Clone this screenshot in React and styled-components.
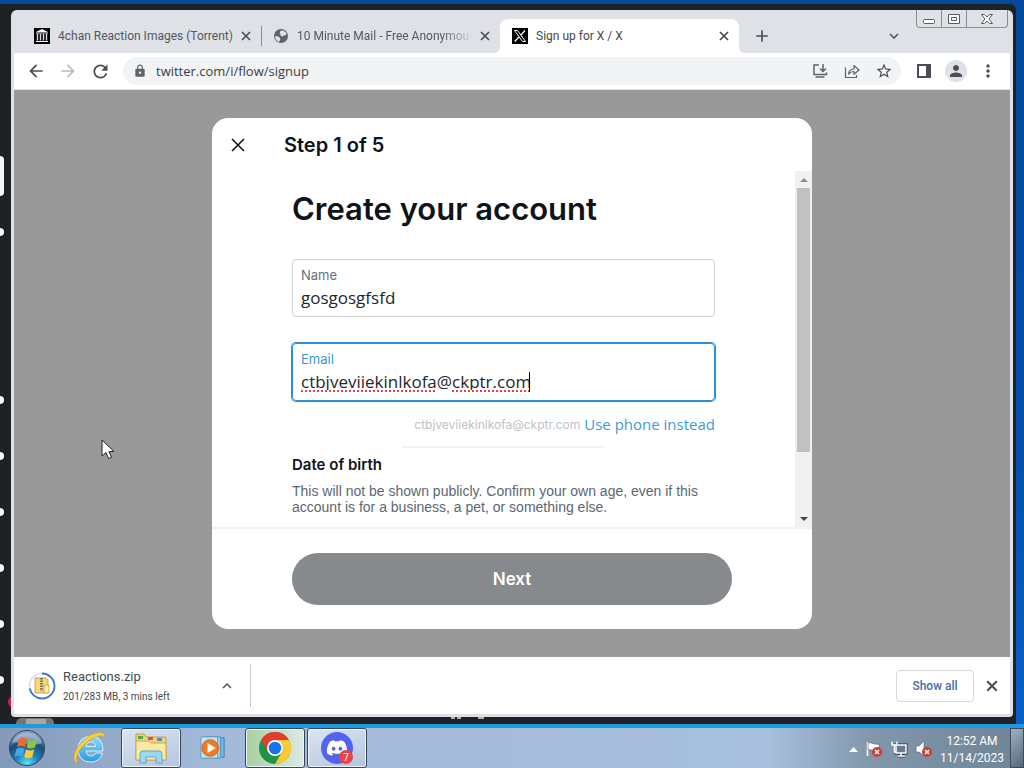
import React from "react";
import styled, { createGlobalStyle } from "styled-components";
import {
    MdArrowBack, MdArrowForward, MdRefresh, MdLock, MdStarBorder, MdPerson,
    MdMoreVert, MdAdd, MdExpandMore, MdExpandLess, MdPublic,
} from "react-icons/md";
import { FaDiscord } from "react-icons/fa";


const tabs = [
    { title: "4chan Reaction Images (Torrent)", icon: "archive", divider: true },
    { title: "10 Minute Mail - Free Anonymou", icon: "globe", fade: true },
    { title: "Sign up for X / X", icon: "x", active: true },
];

// which servers in the window behind have an unread mark
const servers = ["current", "unread", "", "", "unread", "unread", "unread", "unread", "unread"];

const CrossIcon = ({ size }) => (
    <svg width={size} height={size} viewBox="0 0 10 10">
        <path d="m1 1 8 8M9 1 1 9" stroke="#4a4e54" strokeWidth="1.700"/>
    </svg>
)

const ArchiveIcon = () => (
    <svg width="16" height="16" viewBox="0 0 16 16">
        <rect width="16" height="16" fill="#000"/>
        <path d="M8 1 14 4H2zM2 4.500h12v1H2zM2 13h12v1H2z" fill="#fff"/>
        <path d="M3.500 6v6.500M6.500 6v6.500M9.500 6v6.500M12.500 6v6.500" stroke="#ddd" strokeWidth="1.400"/>
    </svg>
)

const GlobeIcon = () => (
    <svg width="16" height="16" viewBox="0 0 16 16">
        <circle cx="8" cy="8" r="7" fill="#5f6368"/>
        <path d="M2 8.500c2-.5 4 0 5 1.500s-.5 2.500-1 4C3.500 13 2 11 2 8.500zM8 2.500c2.500-.5 5 1 5.700 3.500-1.700 2-3.200 1-3.700 2.500-2 0-3-1-2.500-2.500C6 5.500 7 3.500 8 2.500z" fill="#dee1e6"/>
    </svg>
)

const XIcon = () => (
    <svg width="16" height="16" viewBox="0 0 16 16">
        <rect width="16" height="16" fill="#000"/>
        <path d="M2.500 2.500h3l8 11h-3z" fill="none" stroke="#fff" strokeWidth="1"/>
        <path d="M13 2.500 9 7M7 9l-4.300 4.500" stroke="#fff" strokeWidth="1.200"/>
    </svg>
)

const InstallIcon = () => (
    <svg width="16" height="16" viewBox="0 0 16 16" fill="none" stroke="#5f6368" strokeWidth="1.500">
        <path d="M7 2H2v9.500h12.500V9.500M3.500 14h9M11 1v7M8 5.500l3 3 3-3"/>
    </svg>
)

const ShareIcon = () => (
    <svg width="16" height="16" viewBox="0 0 16 16" fill="none" stroke="#5f6368" strokeWidth="1.200" strokeLinejoin="round">
        <path d="M1.500 4.500v10h11V12"/>
        <path d="M4.500 11c.5-3.500 2.500-5 5.500-5V2.500l5 4.500-5 4.300V8.500C7.500 8.500 6 9.200 4.500 11z"/>
    </svg>
)

const ZipIcon = () => (
    <svg width="28" height="28" viewBox="0 0 28 28">
        <circle cx="14" cy="14" r="12.500" fill="none" stroke="#d6def0" strokeWidth="1.600"/>
        <circle cx="14" cy="14" r="12.500" fill="none" stroke="#3f72d0" strokeWidth="1.800" strokeDasharray="56 23" transform="rotate(-90 14 14)"/>
        <path d="M7 6h11l2 2v13H7z" fill="#f4d97c" stroke="#b99a3c" strokeWidth=".8"/>
        <path d="M16 13h5v8h-5z" fill="#ffe9a0" stroke="#b99a3c" strokeWidth=".7"/>
        <path d="M13.500 6v13" stroke="#666" strokeWidth="2.500" strokeDasharray="1.500 1"/>
    </svg>
)

const OrbIcon = () => (
    <svg width="38" height="38" viewBox="0 0 38 38">
        <defs>
            <radialGradient id="orb" cx="50%" cy="95%" r="90%">
                <stop offset="0" stopColor="#5fe6f8"/>
                <stop offset=".35" stopColor="#1d86bd"/>
                <stop offset=".7" stopColor="#1f4a75"/>
                <stop offset="1" stopColor="#8ca9c6"/>
            </radialGradient>
        </defs>
        <circle cx="19" cy="19" r="17.500" fill="url(#orb)" stroke="#2a4562"/>
        <path d="M4 14C8 1 30 1 34 14 25 19 13 11 4 14z" fill="#d8e8f4" opacity=".45"/>
        <path d="M11 10c3-2 5-1.500 8 0l-2 8c-3-1.500-5-1.500-8 0z" fill="#ee6a2c"/>
        <path d="M20.500 11c3 1.500 5 1.300 8.500-.5l-2.200 8c-3 1.500-5 1.500-8.300-.3z" fill="#8fc63d"/>
        <path d="M8.500 20c3-2 5-1.500 8-.2l-2 7.700c-3-1.500-5-1.200-8 .5z" fill="#4aa5e6"/>
        <path d="M18 20.500c3 1.500 5 1.500 8.300-.3l-2.200 8c-3 1.500-5.200 1.500-8.100-.2z" fill="#fcc93a"/>
    </svg>
)

const ExplorerIcon = () => (
    <svg width="34" height="34" viewBox="0 0 34 34">
        <defs>
            <linearGradient id="ie" x2="0" y2="1">
                <stop offset="0" stopColor="#8fdcf8"/>
                <stop offset="1" stopColor="#2a9be0"/>
            </linearGradient>
        </defs>
        <path d="M31 20H14q1 5 5 5 3 0 5-3h6.500Q28 31 18.500 31 7 31 6 19 6 6 18.500 5 31 5 31 20zM14 15.500h9.500Q23 11 19 11t-5 4.500z" fill="url(#ie)" stroke="#d9f1fb" strokeWidth="1"/>
        <path d="M7 31C0 34 0 22 8 13 16 3 28-1 32 3q1 2 0 4C31 2 20 6 12 14 5 21 2 30 7 31z" fill="#f6cf3c" stroke="#c89b28" strokeWidth=".5"/>
    </svg>
)

const FolderIcon = () => (
    <svg width="34" height="34" viewBox="0 0 34 34">
        <path d="M2 6V3h8l2 3h20v23H2z" fill="#f0d27b" stroke="#c29d42"/>
        <path d="M4 5h5v3H4z" fill="#4ba83e"/>
        <path d="M14 6h5v3h-5z" fill="#d65540"/>
        <path d="M23 7h5v3h-5z" fill="#4b8fd0"/>
        <path d="M2 10h13l2 2h15v17H2z" fill="#fbeaa3" stroke="#cbaa52"/>
        <path d="M6 32v-9q0-3 3-3h16q3 0 3 3v9h-6v-6H12v6z" fill="#9bd9f3" stroke="#5aa6cc"/>
    </svg>
)

const PlayerIcon = () => (
    <svg width="28" height="26" viewBox="0 0 30 28">
        <path d="M9 3h18v21H9z" fill="#72b5de" stroke="#4086b4"/>
        <path d="M5 2h18v23H5z" fill="#a6d5ee" stroke="#4c94c2"/>
        <path d="M2 2h18v23H2z" fill="#c3e2f2" stroke="#5a9cc5"/>
        <circle cx="12" cy="14" r="9" fill="#ef7b23" stroke="#d7651a"/>
        <path d="M9 8.500v11l9-5.500z" fill="#fff"/>
    </svg>
)

const ChromeIcon = () => (
    <svg width="32" height="32" viewBox="0 0 32 32">
        <circle cx="16" cy="16" r="16" fill="#1e9446"/>
        <path d="M9.100 20 2.140 8A16 16 0 0 1 29.860 8H16z" fill="#e33b2e"/>
        <path d="M22.900 20 16 32A16 16 0 0 0 29.860 8H16a8 8 0 0 1 6.900 12z" fill="#fcc934"/>
        <circle cx="16" cy="16" r="8" fill="#fff"/>
        <circle cx="16" cy="16" r="6.300" fill="#1a73e8"/>
    </svg>
)

const FlagIcon = () => (
    <svg width="18" height="18" viewBox="0 0 18 18">
        <path d="M2.500 2v14" stroke="#fff" strokeWidth="1.600"/>
        <path d="M3 3c4-1 5 2 11 1v7C9 12 7 9 3 10z" fill="#fff" stroke="#4b5a68" strokeWidth=".6"/>
        <circle cx="12" cy="12" r="5" fill="#d13b36"/>
        <path d="m10 10 4 4m0-4-4 4" stroke="#fff" strokeWidth="1.500"/>
    </svg>
)

const NetworkIcon = () => (
    <svg width="18" height="18" viewBox="0 0 18 18">
        <path d="M6 5h10v8H6zM8 16h7M11 13v3" fill="#667c91" stroke="#27323d" strokeWidth="3"/>
        <path d="M6 5h10v8H6zM8 16h7M11 13v3" fill="#667c91" stroke="#fff" strokeWidth="1.500"/>
        <path d="M2 1.500v3.500h5V1.500M4.500 5v7H6" fill="none" stroke="#fff" strokeWidth="1.400"/>
    </svg>
)

const SpeakerIcon = () => (
    <svg width="18" height="18" viewBox="0 0 18 18">
        <path d="M1 6h3l5-5v15l-5-4H1z" fill="#fff" stroke="#4b5a68" strokeWidth=".6"/>
        <circle cx="12" cy="12" r="5" fill="#d13b36"/>
        <path d="m10 10 4 4m0-4-4 4" stroke="#fff" strokeWidth="1.500"/>
    </svg>
)

const tabIcons = { archive: ArchiveIcon, globe: GlobeIcon, x: XIcon };

const Field = ({ id, label, value, focused, children }) => (
    <FieldBox $focused={focused}>
        <FieldLabel htmlFor={id} $focused={focused}>{label}</FieldLabel>
        <FieldInput id={id} type="text" defaultValue={value} spellCheck={false}/>
        {children}
    </FieldBox>
)

const SignupModal = () => (
    <Modal role="dialog" aria-labelledby="step">
        <ModalHeader>
            <CloseButton aria-label="Close">
                <svg width="14" height="14" viewBox="0 0 14 14"><path d="m1 1 12 12M13 1 1 13" stroke="#0f1419" strokeWidth="1.600"/></svg>
            </CloseButton>
            <StepTitle id="step">Step 1 of 5</StepTitle>
        </ModalHeader>
        <ModalBody>
            <Form>
                <Title>Create your account</Title>
                <Field id="name" label="Name" value="gosgosgfsfd"/>
                <Field id="email" label="Email" value="ctbjveviiekinlkofa@ckptr.com" focused>
                    <SpellMarks aria-hidden="true">
                        <Squiggle $width={136}/>
                        <Squiggle $width={77}/>
                        <Caret/>
                    </SpellMarks>
                </Field>
                <SwitchRow>
                    <Suggestion>ctbjveviiekinlkofa@ckptr.com</Suggestion>
                    <PhoneLink href="#phone">Use phone instead</PhoneLink>
                </SwitchRow>
                <BirthTitle>Date of birth</BirthTitle>
                <BirthText>This will not be shown publicly. Confirm your own age, even if this account is for a business, a pet, or something else.</BirthText>
            </Form>
            <Scrollbar aria-hidden="true">
                <ScrollArrow $up/>
                <ScrollThumb/>
                <ScrollArrow/>
            </Scrollbar>
        </ModalBody>
        <ModalFooter>
            <NextButton>Next</NextButton>
        </ModalFooter>
    </Modal>
)

const Browser = () => (
    <Window>
        <TabStrip>
            {tabs.map((tab) => {
                const Icon = tabIcons[tab.icon];
                return (
                    <Tab key={tab.title} $active={tab.active} $divider={tab.divider}>
                        <TabIcon><Icon/></TabIcon>
                        <TabTitle $active={tab.active} $fade={tab.fade}>{tab.title}</TabTitle>
                        <IconButton $size={16} aria-label="Close tab"><CrossIcon size={10}/></IconButton>
                    </Tab>
                )
            })}
            <NewTab $size={28} aria-label="New tab"><MdAdd size={20}/></NewTab>
            <Spacer/>
            <SearchTabs $size={28} aria-label="Search tabs"><MdExpandMore size={18}/></SearchTabs>
            <WindowControls>
                <WindowControl $width={24} aria-label="Minimize">
                    <svg width="12" height="12" viewBox="0 0 12 12"><rect x=".5" y="6.500" width="11" height="4" rx="1" fill="#fff" stroke="#555b66"/></svg>
                </WindowControl>
                <WindowControl $width={25} aria-label="Restore">
                    <svg width="12" height="12" viewBox="0 0 12 12"><path d="M.5 1.500h11v9H.5zM3.500 4.500h5v3h-5z" fill="#fff" stroke="#555b66"/></svg>
                </WindowControl>
                <WindowControl $width={41} aria-label="Close window">
                    <svg width="12" height="12" viewBox="0 0 12 12"><path d="M.5 1.500h3L6 4l2.500-2.500h3L8 6l3.500 4.500h-3L6 8l-2.500 2.500h-3L4 6z" fill="#fff" stroke="#555b66"/></svg>
                </WindowControl>
            </WindowControls>
        </TabStrip>
        <Toolbar>
            <IconButton $size={32} aria-label="Back"><MdArrowBack size={20}/></IconButton>
            <IconButton $size={32} $color="#babcbe" aria-label="Forward"><MdArrowForward size={20}/></IconButton>
            <IconButton $size={32} aria-label="Reload"><MdRefresh size={21}/></IconButton>
            <AddressBar>
                <MdLock size={14} color="#5f6368"/>
                <Address aria-label="Address" defaultValue="twitter.com/i/flow/signup"/>
                <IconButton $size={32} aria-label="Install"><InstallIcon/></IconButton>
                <IconButton $size={32} aria-label="Share"><ShareIcon/></IconButton>
                <IconButton $size={32} aria-label="Bookmark"><MdStarBorder size={18}/></IconButton>
            </AddressBar>
            <IconButton $size={32} aria-label="Side panel">
                <svg width="14" height="14" viewBox="0 0 14 14"><path d="M1 1h12v12H1z" fill="none" stroke="#4a4e54" strokeWidth="2"/><path d="M9 1h4v12H9z" fill="#4a4e54"/></svg>
            </IconButton>
            <IconButton $size={32} aria-label="Profile"><Avatar><MdPerson size={18}/></Avatar></IconButton>
            <IconButton $size={32} aria-label="Menu"><MdMoreVert size={20}/></IconButton>
        </Toolbar>
        <Page>
            <SignupModal/>
        </Page>
        <Downloads>
            <Download>
                <ZipIcon/>
                <DownloadText>
                    <FileName>Reactions.zip</FileName>
                    <FileInfo>201/283 MB, 3 mins left</FileInfo>
                </DownloadText>
                <IconButton $size={32} aria-label="Download options"><MdExpandLess size={18}/></IconButton>
            </Download>
            <Spacer/>
            <ShowAll>Show all</ShowAll>
            <IconButton $size={36} aria-label="Close downloads"><CrossIcon size={12}/></IconButton>
        </Downloads>
    </Window>
)

const App = () => {
    return (
        <Desktop>
            <GlobalStyle/>
            <Workspace>
                <BackWindow>
                    <ServerRail>
                        {servers.map((state, i) => (
                            <ServerRow key={i}><ServerMark $state={state}/></ServerRow>
                        ))}
                        <ServerRow><ServerMark $state="unread"/><ServerBadge/></ServerRow>
                    </ServerRail>
                    <Browser/>
                    <Peek width="490" height="7" viewBox="0 0 490 7">
                        <path d="M16 7q0-6 6-6h27q5 0 5 6z" fill="#77766c"/>
                        <path d="M26 2h20v5H26z" fill="#a9a89c"/>
                        <path d="M451 1h4M457 1h4M478 1h6" stroke="#e4e4e6" strokeWidth="1.500"/>
                    </Peek>
                </BackWindow>
            </Workspace>
            <Taskbar>
                <StartButton $width={54} aria-label="Start"><OrbIcon/></StartButton>
                <TaskButton $width={60} aria-label="Internet Explorer"><ExplorerIcon/></TaskButton>
                <TaskButton $width={60} $open aria-label="Windows Explorer"><FolderIcon/></TaskButton>
                <TaskButton $width={60} aria-label="Media Player"><PlayerIcon/></TaskButton>
                <TaskButton $width={60} $open $current aria-label="Chrome"><ChromeIcon/></TaskButton>
                <TaskButton $width={60} $open aria-label="Discord">
                    <DiscordBadge><FaDiscord size={22}/><Count>7</Count></DiscordBadge>
                </TaskButton>
                <Spacer/>
                <Tray>
                    <svg width="9" height="5" viewBox="0 0 9 5"><path d="M0 5 4.500 0 9 5z" fill="#fff"/></svg>
                    <FlagIcon/>
                    <NetworkIcon/>
                    <SpeakerIcon/>
                </Tray>
                <Clock>12:52 AM<br/>11/14/2023</Clock>
                <ShowDesktop aria-label="Show desktop"/>
            </Taskbar>
            <Pointer width="14" height="22" viewBox="0 0 14 22">
                <path d="M1 1v16l4-3.500 2.500 6 3-1.200L8 12.500h5z" fill="#fff" stroke="#222" strokeWidth="1"/>
            </Pointer>
        </Desktop>
    )
}


//styling
const GlobalStyle = createGlobalStyle`
* { box-sizing: border-box; }
body { margin: 0; font-family: "Open Sans", "Noto Sans", sans-serif; }
button, input { font: inherit; margin: 0; padding: 0; border: 0; background: none; outline: 0; }
svg { display: block; flex-shrink: 0; }
h1, h2, h3, p { margin: 0; }
`
const Desktop = styled.div`
position: relative;
display: flex;
flex-direction: column;
min-height: 100vh;
background: linear-gradient(180deg, #03499c, #0550ac 60%, #0a63cf);
`
const Workspace = styled.main`
flex: 1;
display: flex;
padding: 4px 8px 0 0;
`
const BackWindow = styled.div`
position: relative;
flex: 1;
display: flex;
min-width: 0;
padding: 6px 3px 7px 0;
background: #202125;
border-radius: 0 6px 0 0;
`
const ServerRail = styled.div`
width: 11px;
padding-top: 138px;
overflow: hidden;
`
const ServerRow = styled.div`
display: flex;
align-items: center;
height: 56px;
`
const ServerMark = styled.span`
flex-shrink: 0;
width: 4px;
height: ${({ $state }) => $state === "current" ? "40px" : $state === "unread" ? "8px" : "0"};
background: #f5f6f8;
border-radius: 0 4px 4px 0;
`
const ServerBadge = styled.span`
align-self: flex-end;
flex-shrink: 0;
width: 12px;
height: 12px;
margin-left: 4px;
border-radius: 50%;
background: #c2274f;
`
const Peek = styled.svg`
position: absolute;
left: 0;
bottom: 0;
`
const Spacer = styled.div`
flex: 1;
`
const Window = styled.div`
flex: 1;
display: flex;
flex-direction: column;
min-width: 0;
border: 3px solid #dee1e6;
border-top: 0;
border-radius: 6px 6px 4px 4px;
background: #dee1e6;
`
const IconButton = styled.button`
display: flex;
align-items: center;
justify-content: center;
flex-shrink: 0;
width: ${({ $size }) => $size}px;
height: ${({ $size }) => $size}px;
color: ${({ $color }) => $color || "#4a4e54"};
`
const TabStrip = styled.div`
display: flex;
align-items: flex-end;
height: 43px;
padding-left: 8px;
`
const Tab = styled.div`
position: relative;
display: flex;
align-items: center;
flex: 0 1 239px;
min-width: 0;
height: 34px;
padding: 0 7px 0 12px;
border-radius: 8px 8px 0 0;
background: ${({ $active }) => $active ? "#fff" : "transparent"};
&::before {
    content: "";
    display: ${({ $active }) => $active ? "block" : "none"};
    position: absolute;
    left: -6px;
    right: -6px;
    bottom: 0;
    height: 6px;
    background:
        radial-gradient(circle at 0 0, transparent 6px, #fff 6px) left / 6px 6px no-repeat,
        radial-gradient(circle at 100% 0, transparent 6px, #fff 6px) right / 6px 6px no-repeat;
}
&::after {
    content: "";
    display: ${({ $divider }) => $divider ? "block" : "none"};
    position: absolute;
    right: -1px;
    height: 20px;
    border-right: 1px solid #8b8e94;
}
`
const TabIcon = styled.span`
display: flex;
justify-content: center;
width: 16px;
margin-right: 8px;
`
const TabTitle = styled.span`
flex: 1;
overflow: hidden;
white-space: nowrap;
font-family: Roboto, sans-serif;
font-size: 12px;
line-height: 16px;
color: ${({ $active }) => $active ? "#45494d" : "#54585d"};
mask-image: ${({ $fade }) => $fade ? "linear-gradient(90deg, #000 80%, transparent 98%)" : "none"};
`
const NewTab = styled(IconButton)`
margin: 0 0 3px 9px;
`
const SearchTabs = styled(IconButton)`
margin: 0 8px 3px 0;
`
const WindowControls = styled.div`
display: flex;
align-self: flex-start;
margin: 0 2px 0 0;
border: 1px solid #8a8e95;
border-top: 0;
border-radius: 0 0 4px 4px;
`
const WindowControl = styled.button`
display: flex;
align-items: center;
justify-content: center;
width: ${({ $width }) => $width}px;
height: 17px;
& + & { border-left: 1px solid #8a8e95; }
`
const Toolbar = styled.div`
display: flex;
align-items: center;
height: 37px;
padding: 0 6px;
background: #fff;
border-bottom: 1px solid #e4e4e4;
`
const AddressBar = styled.div`
flex: 1;
display: flex;
align-items: center;
min-width: 0;
height: 28px;
margin: 0 7px;
padding: 0 1px 0 10px;
background: #f1f3f4;
border-radius: 14px;
`
const Address = styled.input`
flex: 1;
min-width: 0;
margin-left: 9px;
font-size: 13px;
color: #3c4043;
`
const Avatar = styled.span`
display: flex;
align-items: center;
justify-content: center;
width: 22px;
height: 22px;
border-radius: 50%;
background: #dee1e6;
`
const Page = styled.div`
flex: 1;
display: flex;
align-items: center;
justify-content: center;
padding: 28px 0;
background: #999;
`
const Modal = styled.section`
width: 600px;
max-width: 100%;
background: #fff;
border-radius: 16px;
`
const ModalHeader = styled.header`
display: flex;
align-items: center;
height: 53px;
padding: 0 16px;
`
const CloseButton = styled.button`
display: flex;
width: 56px;
padding-left: 3px;
`
const StepTitle = styled.h2`
font-family: Inter, sans-serif;
font-size: 20px;
line-height: 24px;
font-weight: 600;
color: #0f1419;
`
const ModalBody = styled.div`
display: flex;
height: 356px;
overflow: hidden;
`
const Form = styled.form`
flex: 1;
min-width: 0;
padding: 20px 80px 0;
`
const Title = styled.h1`
margin-bottom: 32px;
font-family: Inter, sans-serif;
font-size: 31px;
line-height: 36px;
font-weight: 600;
color: #0f1419;
`
const FieldBox = styled.div`
position: relative;
display: flex;
flex-direction: column;
height: 58px;
margin-bottom: 26px;
padding: 7px 8px 0;
border: 1px solid ${({ $focused }) => $focused ? "#2a8fd4" : "#cfd3d6"};
border-radius: 4px;
box-shadow: ${({ $focused }) => $focused ? "0 0 0 1px #2a8fd4" : "none"};
`
const FieldLabel = styled.label`
font-family: Inter, sans-serif;
font-size: 13px;
line-height: 16px;
color: ${({ $focused }) => $focused ? "#3d97d0" : "#667079"};
`
const FieldInput = styled.input`
width: 100%;
height: 28px;
font-size: 17px;
color: #22272b;
`
const SpellMarks = styled.div`
position: absolute;
left: 8px;
bottom: 8px;
display: flex;
align-items: flex-end;
gap: 15px;
`
const Squiggle = styled.span`
width: ${({ $width }) => $width}px;
height: 2px;
background: repeating-linear-gradient(90deg, #e2444f 0 2px, #fff 2px 4px);
`
const Caret = styled.span`
width: 1px;
height: 20px;
margin-left: -15px;
background: #000;
`
const SwitchRow = styled.div`
display: flex;
align-items: center;
justify-content: flex-end;
gap: 4px;
height: 34px;
margin-top: -20px;
`
const Suggestion = styled.span`
position: relative;
font-family: Inter, sans-serif;
font-size: 12px;
color: #c0c2c4;
&::after {
    content: "";
    position: absolute;
    left: -12px;
    right: -24px;
    top: 29px;
    border-top: 2px solid #f2f2f2;
}
`
const PhoneLink = styled.a`
font-size: 15px;
line-height: 20px;
color: #3d9bd8;
text-decoration: none;
`
const BirthTitle = styled.h3`
margin-top: 14px;
font-family: Inter, sans-serif;
font-size: 15px;
line-height: 20px;
font-weight: 600;
color: #0f1419;
`
const BirthText = styled.p`
margin-top: 8px;
font-family: "Liberation Sans", sans-serif;
font-size: 14px;
line-height: 16px;
color: #5b6770;
`
const Scrollbar = styled.div`
display: flex;
flex-direction: column;
width: 17px;
background: #f1f1f1;
`
const ScrollArrow = styled.span`
display: flex;
align-items: center;
justify-content: center;
height: 17px;
margin-top: ${({ $up }) => $up ? "0" : "auto"};
&::before {
    content: "";
    border: 4px solid transparent;
    border-width: ${({ $up }) => $up ? "0 4px 4px" : "4px 4px 0"};
    border-bottom-color: #8c8c8c;
    border-top-color: #444;
}
`
const ScrollThumb = styled.span`
height: 264px;
margin: 0 2px;
background: #c1c1c1;
`
const ModalFooter = styled.footer`
padding: 24px 80px;
border-top: 2px solid #f2f2f2;
`
const NextButton = styled.button`
width: 100%;
height: 52px;
border-radius: 26px;
background: #878a8c;
font-family: Inter, sans-serif;
font-size: 17px;
font-weight: 600;
color: #fff;
`
const Downloads = styled.footer`
display: flex;
align-items: center;
height: 57px;
background: #fff;
`
const Download = styled.div`
display: flex;
align-items: center;
gap: 7px;
width: 237px;
height: 43px;
padding: 0 7px 0 14px;
border-right: 1px solid #c8cacd;
`
const DownloadText = styled.div`
flex: 1;
display: flex;
flex-direction: column;
gap: 4px;
padding-top: 2px;
font-family: Roboto, sans-serif;
color: #45494d;
`
const FileName = styled.span`
font-size: 13px;
line-height: 16px;
`
const FileInfo = styled.span`
font-size: 10px;
line-height: 16px;
`
const ShowAll = styled.button`
width: 78px;
height: 32px;
border: 1px solid #d5d8dc;
border-radius: 4px;
font-family: Roboto, sans-serif;
font-size: 12px;
font-weight: 500;
color: #4a6cab;
`
const Taskbar = styled.footer`
display: flex;
align-items: center;
height: 44px;
gap: 2px;
border-top: 4px solid #1b9ce2;
background: linear-gradient(90deg, #8399b8, #a3b9d8 20%, #a7c0de 75%, #8197ab 85%, #6f8496);
`
const TaskButton = styled.button`
display: flex;
align-items: center;
justify-content: center;
width: ${({ $width }) => $width}px;
height: 40px;
border: 1px solid ${({ $open }) => $open ? "#33475c" : "transparent"};
border-radius: 3px;
background: ${({ $open, $current }) => $current ? "linear-gradient(90deg, #a6cf9f, #dce9e4)" : $open ? "linear-gradient(160deg, #dbe5f2, #b2c5df)" : "none"};
box-shadow: ${({ $open }) => $open ? "inset 0 0 0 1px #eef4fa" : "none"};
`
const StartButton = styled(TaskButton)`
margin-right: 3px;
`
const DiscordBadge = styled.span`
position: relative;
display: flex;
align-items: center;
justify-content: center;
width: 32px;
height: 32px;
border-radius: 50%;
background: #5463ee;
color: #fff;
`
const Count = styled.span`
position: absolute;
right: 0;
bottom: 0;
width: 14px;
height: 14px;
border-radius: 50%;
background: #ed4245;
font-size: 10px;
line-height: 14px;
`
const Tray = styled.div`
display: flex;
align-items: center;
gap: 7px;
margin-right: 1px;
padding-top: 2px;
`
const Clock = styled.time`
width: 72px;
padding-top: 3px;
font-family: Roboto, sans-serif;
font-size: 12px;
line-height: 17px;
text-align: center;
color: #fff;
`
const ShowDesktop = styled.button`
width: 14px;
height: 40px;
border: 1px solid #3c4c5c;
background: linear-gradient(135deg, #a2b1bf, #53677a);
`
const Pointer = styled.svg`
position: absolute;
left: 101px;
top: 439px;
`
export default App;
